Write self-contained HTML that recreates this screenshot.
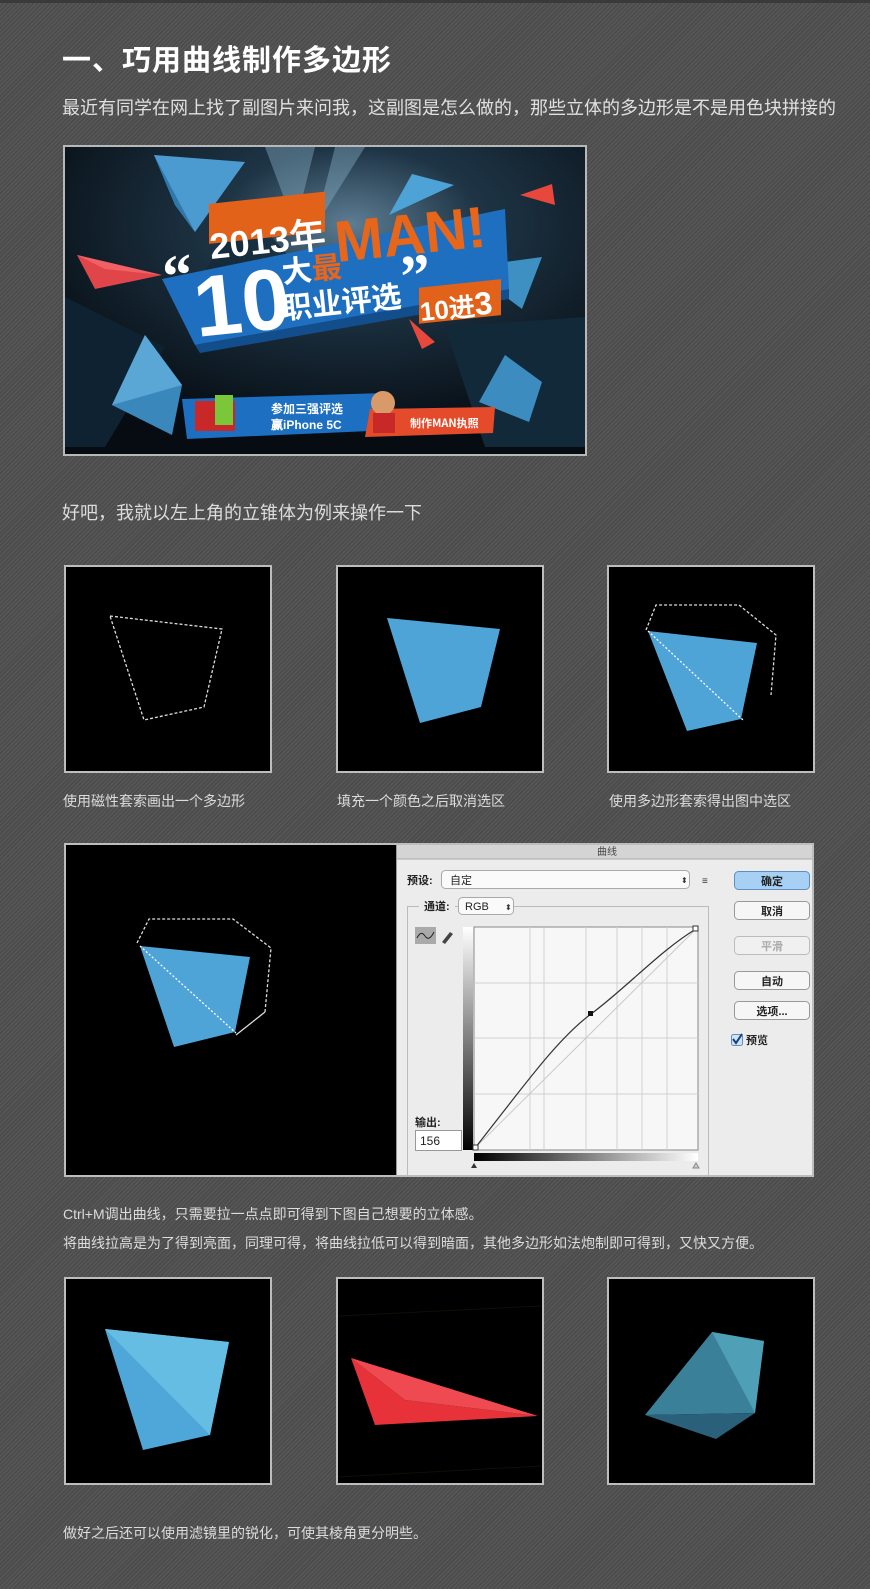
<!DOCTYPE html>
<html><head><meta charset="utf-8">
<style>
*{margin:0;padding:0;box-sizing:border-box}
body{width:870px;height:1589px;position:relative;overflow:hidden;font-family:"Liberation Sans","Noto Sans CJK SC",sans-serif;background:#505050;background-image:repeating-linear-gradient(135deg,#5a5a5a 0 1px,#4c4c4c 1px 3px);}
.t{position:absolute;color:#dcdcdc;white-space:nowrap}
.box{position:absolute;border:2px solid #bdbdbd;background:#000;width:208px;height:208px}
.box svg{position:absolute;left:0;top:0}
</style></head><body>
<div style="position:absolute;left:0;top:0;width:870px;height:3px;background:#3a3a3a"></div>
<div class="t" style="left:62px;top:37px;font-size:29px;font-weight:bold;color:#fff;letter-spacing:1px">一、巧用曲线制作多边形</div>
<div class="t" style="left:62px;top:94px;font-size:18px;color:#e0e0e0">最近有同学在网上找了副图片来问我，这副图是怎么做的，那些立体的多边形是不是用色块拼接的</div>

<div style="position:absolute;left:63px;top:145px;width:524px;height:311px;border:2px solid #b8b8b8;background:#0b1520;overflow:hidden">
<svg width="520" height="307" viewBox="0 0 520 307">
<defs><radialGradient id="rg" cx="0.55" cy="0.25" r="0.7"><stop offset="0" stop-color="#5d7d93"/><stop offset="0.35" stop-color="#1e3546"/><stop offset="1" stop-color="#060c12"/></radialGradient></defs>
<rect width="520" height="307" fill="url(#rg)"/>
<polygon points="180,60 130,140 260,150" fill="#142a3a" opacity=".8"/>
<polygon points="0,150 100,200 40,300 0,300" fill="#0f2232"/>
<polygon points="380,180 520,170 520,300 420,300" fill="#12293a"/>
<polygon points="200,0 230,80 250,0" fill="#8fb6cc" opacity=".4"/>
<polygon points="270,0 250,80 300,0" fill="#8fb6cc" opacity=".4"/>
<polygon points="89,8 180,15 130,85 110,58" fill="#4b9bd0"/>
<polygon points="89,8 110,58 130,85" fill="#2f78ab"/>
<polygon points="12,108 97,128 30,142" fill="#e0454a"/>
<polygon points="12,108 97,128 40,122" fill="#f06065"/>
<polygon points="347,27 389,38 324,68" fill="#4ea3d6"/>
<polygon points="455,48 487,37 490,58" fill="#e8473c"/>
<polygon points="440,115 477,110 457,162 430,142" fill="#3e8fc2"/>
<polygon points="47,258 80,188 117,238 107,288" fill="#3a87bb"/>
<polygon points="80,188 117,238 47,258" fill="#5aa7d6"/>
<polygon points="414,255 440,208 477,235 464,275" fill="#3d8cbf"/>
<polygon points="344,172 370,195 357,202" fill="#e8473c"/>
<polygon points="97,132 440,62 444,142 130,198" fill="#1f6fc0"/>
<polygon points="130,198 444,142 444,152 135,206" fill="#134e8c"/>
<rect x="144" y="72" width="116" height="40" fill="#e2621a" transform="skewY(-6)" />
<text x="146" y="112" font-family="Liberation Sans" font-weight="bold" font-size="36" fill="#fff" transform="rotate(-6 146 112)">2013年</text>
<text x="272" y="115" font-family="Liberation Sans" font-weight="bold" font-size="58" fill="#e8661a" transform="rotate(-6 272 115)">MAN!</text>
<text x="100" y="150" font-family="Liberation Serif" font-weight="bold" font-size="60" fill="#fff" transform="rotate(-6 100 150)">“</text>
<text x="132" y="190" font-family="Liberation Sans" font-weight="bold" font-size="86" fill="#fff" transform="rotate(-6 132 190)">10</text>
<text x="218" y="136" font-family="Noto Sans CJK SC" font-weight="bold" font-size="30" fill="#fff" transform="rotate(-6 218 136)">大<tspan fill="#e8661a">最</tspan></text>
<text x="218" y="172" font-family="Noto Sans CJK SC" font-weight="bold" font-size="30" fill="#fff" transform="rotate(-6 218 172)">职业评选</text>
<text x="338" y="150" font-family="Liberation Serif" font-weight="bold" font-size="60" fill="#fff" transform="rotate(-6 338 150)">”</text>
<rect x="354" y="140" width="82" height="36" fill="#e2621a" transform="skewY(-6) translate(0,38)"/>
<text x="356" y="174" font-family="Liberation Sans" font-weight="bold" font-size="26" fill="#fff" transform="rotate(-6 356 174)">10进<tspan font-size="32">3</tspan></text>
<polygon points="117,252 320,246 305,284 122,292" fill="#1d6fc2"/>
<rect x="130" y="254" width="40" height="30" fill="#c82828"/>
<rect x="150" y="248" width="18" height="30" fill="#7bc73a"/>
<text x="206" y="266" font-family="Noto Sans CJK SC" font-weight="bold" font-size="12" fill="#fff">参加三强评选</text>
<text x="206" y="282" font-family="Liberation Sans" font-weight="bold" font-size="12" fill="#fff">赢iPhone 5C</text>
<polygon points="305,262 430,260 428,286 300,290" fill="#e44b2a"/>
<circle cx="318" cy="256" r="12" fill="#d99a6a"/>
<rect x="308" y="266" width="22" height="20" fill="#c82828"/>
<text x="345" y="280" font-family="Noto Sans CJK SC" font-weight="bold" font-size="11" fill="#fff">制作MAN执照</text>
</svg>
</div>

<div class="t" style="left:62px;top:499px;font-size:18px">好吧，我就以左上角的立锥体为例来操作一下</div>

<div class="box" style="left:64px;top:565px"><svg width="204" height="204"><polygon points="44,49 156,62 138,140 78,153" fill="none" stroke="#ddd" stroke-width="1.3" stroke-dasharray="3,2"/></svg></div>
<div class="box" style="left:336px;top:565px"><svg width="204" height="204"><polygon points="49,51 162,62 143,140 82,156" fill="#4fa4d7"/></svg></div>
<div class="box" style="left:607px;top:565px"><svg width="204" height="204"><polygon points="39,64 148,76 132,152 78,164" fill="#4fa4d7"/><polyline points="37,63 47,38 130,38 167,68 162,128" fill="none" stroke="#ddd" stroke-width="1.3" stroke-dasharray="3,2"/><line x1="39" y1="64" x2="134" y2="153" stroke="#fff" stroke-width="1.3" stroke-dasharray="2,2"/></svg></div>

<div class="t" style="left:63px;top:791px;font-size:14px">使用磁性套索画出一个多边形</div>
<div class="t" style="left:337px;top:791px;font-size:14px">填充一个颜色之后取消选区</div>
<div class="t" style="left:609px;top:791px;font-size:14px">使用多边形套索得出图中选区</div>

<div style="position:absolute;left:64px;top:843px;width:750px;height:334px;border:2px solid #bdbdbd;background:#000;overflow:hidden">
<svg width="332" height="330" style="position:absolute;left:0;top:0"><g transform="translate(-66,-845)">
<polygon points="140,946 250,957 235,1032 174,1047" fill="#4fa4d7"/>
<polyline points="137,943 149,919 233,919 271,948 265,1012" fill="none" stroke="#ddd" stroke-width="1.3" stroke-dasharray="3,2"/>
<line x1="265" y1="1012" x2="236" y2="1035" stroke="#ddd" stroke-width="1.3"/>
<line x1="140" y1="946" x2="236" y2="1033" stroke="#fff" stroke-width="1.3" stroke-dasharray="2,2"/>
</g></svg>
<div style="position:absolute;left:330px;top:-2px;width:420px;height:336px;background:#ececec;border-left:1px solid #999;font-size:11px;color:#222">
<svg width="420" height="336" style="position:absolute;left:0;top:0"><g transform="translate(-396,-843)" font-family="Liberation Sans,Noto Sans CJK SC,sans-serif">
<rect x="396" y="843" width="420" height="16" fill="#d4d4d4"/>
<line x1="396" y1="859" x2="816" y2="859" stroke="#aaa"/>
<text x="606" y="855" font-size="10" text-anchor="middle" fill="#444">曲线</text>
<text x="406" y="884" font-size="11" font-weight="bold" fill="#222">预设:</text>
<rect x="440.5" y="870.5" width="248" height="18" rx="4" fill="#fafafa" stroke="#aaa"/>
<text x="449" y="884" font-size="11" fill="#222">自定</text>
<text x="680" y="883" font-size="8" fill="#333">⬍</text>
<text x="701" y="884" font-size="10" font-weight="bold" fill="#333">≡</text>
<rect x="406.5" y="906.5" width="301" height="275" fill="none" stroke="#bbb"/>
<rect x="418" y="900" width="36" height="14" fill="#ececec"/>
<text x="423" y="910" font-size="11" font-weight="bold" fill="#222">通道:</text>
<rect x="457.5" y="897.5" width="55" height="17" rx="4" fill="#fafafa" stroke="#aaa"/>
<text x="464" y="910" font-size="11" fill="#222">RGB</text>
<text x="504" y="910" font-size="8" fill="#333">⬍</text>
<rect x="414" y="927" width="21" height="17" fill="#aaa"/>
<path d="M416 938 q4 -8 8 -2 q4 6 9 -4" stroke="#222" fill="none"/>
<path d="M441 942 l8 -10 l3 2 l-8 10 z" fill="#444"/>
<defs><linearGradient id="gv" x1="0" y1="0" x2="0" y2="1"><stop offset="0" stop-color="#fff"/><stop offset="1" stop-color="#000"/></linearGradient><linearGradient id="gh" x1="0" y1="0" x2="1" y2="0"><stop offset="0" stop-color="#000"/><stop offset="1" stop-color="#fff"/></linearGradient></defs>
<rect x="462" y="927" width="10" height="223" fill="url(#gv)"/>
<rect x="473" y="927" width="224" height="223" fill="#f7f7f7" stroke="#888"/>
<g stroke="#d0d0d0">
<line x1="529" y1="927" x2="529" y2="1150"/><line x1="585" y1="927" x2="585" y2="1150"/><line x1="641" y1="927" x2="641" y2="1150"/>
<line x1="543" y1="927" x2="543" y2="1150"/><line x1="616" y1="927" x2="616" y2="1150"/><line x1="666" y1="927" x2="666" y2="1150"/>
<line x1="473" y1="983" x2="697" y2="983"/><line x1="473" y1="1038" x2="697" y2="1038"/><line x1="473" y1="1094" x2="697" y2="1094"/>
</g>
<line x1="474" y1="1148" x2="695" y2="929" stroke="#c8c8c8"/>
<path d="M474 1148 C 520 1090, 555 1040, 590 1014 S 660 950, 695 929" stroke="#333" stroke-width="1.2" fill="none"/>
<rect x="587" y="1011" width="5" height="5" fill="#111"/>
<rect x="692" y="926" width="5" height="5" fill="#fff" stroke="#333"/>
<rect x="472" y="1145" width="5" height="5" fill="#fff" stroke="#333"/>
<text x="414" y="1126" font-size="11" font-weight="bold" fill="#222">输出:</text>
<rect x="414.5" y="1130.5" width="46" height="20" fill="#fff" stroke="#999"/>
<text x="419" y="1145" font-size="12" fill="#222">156</text>
<rect x="473" y="1153" width="224" height="8" fill="url(#gh)"/>
<path d="M473 1163 l-3 5 h6 z" fill="#333"/>
<path d="M695 1163 l-3 5 h6 z" fill="#ccc" stroke="#888"/>
<rect x="733.5" y="871.5" width="75" height="18" rx="4" fill="#a8d0f4" stroke="#5f8fc0"/>
<text x="771" y="885" font-size="11" font-weight="bold" text-anchor="middle" fill="#222">确定</text>
<rect x="733.5" y="901.5" width="75" height="18" rx="4" fill="#f6f6f6" stroke="#999"/>
<text x="771" y="915" font-size="11" font-weight="bold" text-anchor="middle" fill="#222">取消</text>
<rect x="733.5" y="936.5" width="75" height="18" rx="4" fill="#f0f0f0" stroke="#bbb"/>
<text x="771" y="950" font-size="11" font-weight="bold" text-anchor="middle" fill="#aaa">平滑</text>
<rect x="733.5" y="971.5" width="75" height="18" rx="4" fill="#f6f6f6" stroke="#999"/>
<text x="771" y="985" font-size="11" font-weight="bold" text-anchor="middle" fill="#222">自动</text>
<rect x="733.5" y="1001.5" width="75" height="18" rx="4" fill="#f6f6f6" stroke="#999"/>
<text x="771" y="1015" font-size="11" font-weight="bold" text-anchor="middle" fill="#222">选项...</text>
<rect x="730.5" y="1034.5" width="11" height="11" rx="2" fill="#cfe3f7" stroke="#5f8fc0"/>
<path d="M732 1039 l3 4 l6 -9" stroke="#1a3d78" stroke-width="2" fill="none"/>
<text x="745" y="1044" font-size="11" font-weight="bold" fill="#222">预览</text>
</g></svg>
</div>
</div>

<div class="t" style="left:63px;top:1204px;font-size:14px">Ctrl+M调出曲线，只需要拉一点点即可得到下图自己想要的立体感。</div>
<div class="t" style="left:63px;top:1233px;font-size:14px">将曲线拉高是为了得到亮面，同理可得，将曲线拉低可以得到暗面，其他多边形如法炮制即可得到，又快又方便。</div>

<div class="box" style="left:64px;top:1277px"><svg width="204" height="204"><polygon points="39,50 163,63 144,156 77,171" fill="#4fa6d8"/><polygon points="39,50 163,63 144,156" fill="#66bde3"/></svg></div>
<div class="box" style="left:336px;top:1277px"><svg width="204" height="204"><line x1="0" y1="37" x2="204" y2="27" stroke="#120d06"/><line x1="0" y1="198" x2="204" y2="187" stroke="#120d06"/><polygon points="13,79 67,121 200,137 37,146" fill="#e8323a"/><polygon points="13,79 200,137 67,121" fill="#ef4a52"/></svg></div>
<div class="box" style="left:607px;top:1277px"><svg width="204" height="204"><polygon points="103,53 155,62 146,134 36,136" fill="#3b8099"/><polygon points="103,53 155,62 146,134" fill="#4f9fb7"/><polygon points="36,136 146,134 107,160" fill="#2a6079"/></svg></div>

<div class="t" style="left:63px;top:1523px;font-size:14px">做好之后还可以使用滤镜里的锐化，可使其棱角更分明些。</div>
</body></html>
